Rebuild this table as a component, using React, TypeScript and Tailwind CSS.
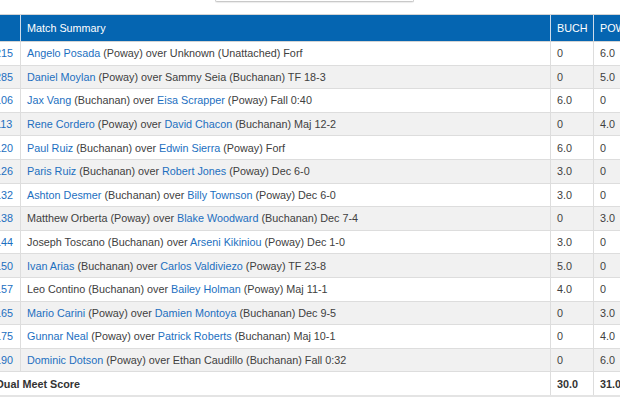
const ROWS: [string, string, string, string][] = [
  ['215', '[Angelo Posada] (Poway) over Unknown (Unattached) Forf', '0', '6.0'],
  ['285', '[Daniel Moylan] (Poway) over Sammy Seia (Buchanan) TF 18-3', '0', '5.0'],
  ['106', '[Jax Vang] (Buchanan) over [Eisa Scrapper] (Poway) Fall 0:40', '6.0', '0'],
  ['113', '[Rene Cordero] (Poway) over [David Chacon] (Buchanan) Maj 12-2', '0', '4.0'],
  ['120', '[Paul Ruiz] (Buchanan) over [Edwin Sierra] (Poway) Forf', '6.0', '0'],
  ['126', '[Paris Ruiz] (Buchanan) over [Robert Jones] (Poway) Dec 6-0', '3.0', '0'],
  ['132', '[Ashton Desmer] (Buchanan) over [Billy Townson] (Poway) Dec 6-0', '3.0', '0'],
  ['138', 'Matthew Orberta (Poway) over [Blake Woodward] (Buchanan) Dec 7-4', '0', '3.0'],
  ['144', 'Joseph Toscano (Buchanan) over [Arseni Kikiniou] (Poway) Dec 1-0', '3.0', '0'],
  ['150', '[Ivan Arias] (Buchanan) over [Carlos Valdiviezo] (Poway) TF 23-8', '5.0', '0'],
  ['157', 'Leo Contino (Buchanan) over [Bailey Holman] (Poway) Maj 11-1', '4.0', '0'],
  ['165', '[Mario Carini] (Poway) over [Damien Montoya] (Buchanan) Dec 9-5', '0', '3.0'],
  ['175', '[Gunnar Neal] (Poway) over [Patrick Roberts] (Buchanan) Maj 10-1', '0', '4.0'],
  ['190', '[Dominic Dotson] (Poway) over Ethan Caudillo (Buchanan) Fall 0:32', '0', '6.0'],
];

const cols = 'grid grid-cols-[32px_530px_43px_60px]';

function Summary({ text }: { text: string }) {
  // wrestler names in [brackets] are links
  const parts = text.split(/(\[[^\]]+\])/).filter(Boolean);
  return (
    <span className="whitespace-pre">
      {parts.map((p, i) =>
        p.startsWith('[') ? (
          <a key={i} href="#" className="text-[#1c6fbf]">
            {p.slice(1, -1)}
          </a>
        ) : (
          p
        ),
      )}
    </span>
  );
}

export default function App() {
  return (
    <div className="relative h-[420px] w-[620px] overflow-hidden bg-white font-['Liberation_Sans',Arial,sans-serif] text-[10.8px] text-[#404040]">
      <div className="ml-[215px] h-[2px] w-[199px] rounded-b-[3px] border-x border-b border-[#c9c9c9] bg-white shadow-[0_1px_1px_rgba(0,0,0,0.08)]" />

      <div className="-ml-[11px] mt-[12px] w-[700px]">
        <div className={`${cols} h-[28px] border-y border-[#d4d4d4] bg-[#0565b1] text-white`}>
          <div className="border-r border-[#cfdceb]" />
          <div className="flex items-center border-r border-[#cfdceb] pl-[6px]">Match Summary</div>
          <div className="flex items-center border-r border-[#cfdceb] pl-[6px]">BUCH</div>
          <div className="flex items-center pl-[6px]">POW</div>
        </div>

        {ROWS.map(([wt, summary, buch, pow], i) => (
          <div
            key={wt}
            className={`${cols} h-[23.6px] border-b border-[#dddddd] ${i % 2 === 1 ? 'bg-[#f1f1f1]' : 'bg-white'}`}
          >
            <div className="flex items-center border-r border-[#dddddd] pl-[6px] text-[#1c6fbf]">{wt}</div>
            <div className="flex items-center border-r border-[#dddddd] pl-[6px]">
              <Summary text={summary} />
            </div>
            <div className="flex items-center border-r border-[#dddddd] pl-[6px]">{buch}</div>
            <div className="flex items-center pl-[6px]">{pow}</div>
          </div>
        ))}

        <div className={`${cols} h-[25px] border-b-2 border-[#e4e4e4] font-bold text-[#333]`}>
          <div className="col-span-2 flex items-center border-r border-[#dddddd] pl-[7px]">Dual Meet Score</div>
          <div className="flex items-center border-r border-[#dddddd] pl-[6px]">30.0</div>
          <div className="flex items-center pl-[6px]">31.0</div>
        </div>
      </div>
    </div>
  );
}
